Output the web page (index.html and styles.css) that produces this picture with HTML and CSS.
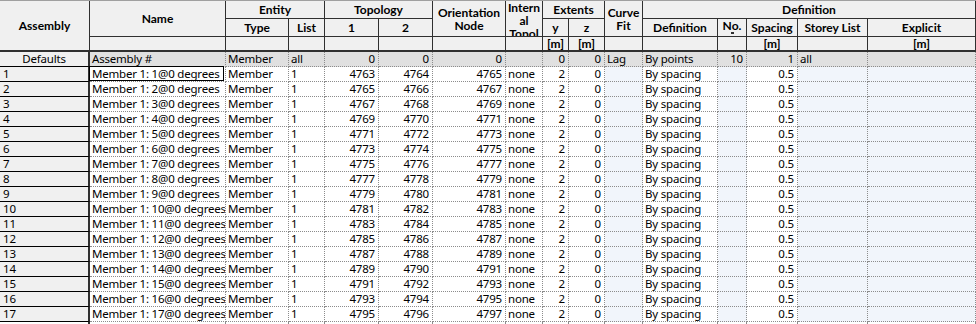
FILE: index.html
```
<!DOCTYPE html>
<html>
<head>
<meta charset="utf-8">
<link rel="stylesheet" href="styles.css">
</head>
<body>
<div class="grid">
<div class="h r3 u"><span>Assembly</span></div>
<div class="h r2"><span>Name</span></div>
<div class="h c2"><span>Entity</span></div>
<div class="h c2"><span>Topology</span></div>
<div class="h r2"><span>Orientation<br>Node</span></div>
<div class="h r2 top"><span>Intern<br>al<br>Topol</span></div>
<div class="h c2"><span>Extents</span></div>
<div class="h r2"><span>Curve<br>Fit</span></div>
<div class="h c5"><span>Definition</span></div>
<div class="h"><span>Type</span></div>
<div class="h"><span>List</span></div>
<div class="h"><span>1</span></div>
<div class="h"><span>2</span></div>
<div class="h"><span>y</span></div>
<div class="h"><span>z</span></div>
<div class="h"><span>Definition</span></div>
<div class="h top"><span>No.<i class="mk"></i></span></div>
<div class="h"><span>Spacing</span></div>
<div class="h"><span>Storey List</span></div>
<div class="h"><span>Explicit</span></div>
<div class="h u"></div>
<div class="h u"></div>
<div class="h u"></div>
<div class="h u"></div>
<div class="h u"></div>
<div class="h u"></div>
<div class="h u"></div>
<div class="h u"><span>[m]</span></div>
<div class="h u"><span>[m]</span></div>
<div class="h u"></div>
<div class="h u"></div>
<div class="h u"></div>
<div class="h u"><span>[m]</span></div>
<div class="h u"></div>
<div class="h u"><span>[m]</span></div>

<div class="rh def">Defaults</div><div class="c d">Assembly #</div><div class="c d">Member</div><div class="c d">all</div><div class="c d n">0</div><div class="c d n">0</div><div class="c d n">0</div><div class="c d"></div><div class="c d n">0</div><div class="c d n">0</div><div class="c d">Lag</div><div class="c d">By points</div><div class="c d n">10</div><div class="c d n">1</div><div class="c d">all</div><div class="c d"></div>

<div class="rh">1</div><div class="c focus">Member 1: 1@0 degrees</div><div class="c">Member</div><div class="c">1</div><div class="c n">4763</div><div class="c n">4764</div><div class="c n">4765</div><div class="c">none</div><div class="c n">2</div><div class="c n">0</div><div class="c b"></div><div class="c">By spacing</div><div class="c b"></div><div class="c n">0.5</div><div class="c b"></div><div class="c b"></div>
<div class="rh">2</div><div class="c">Member 1: 2@0 degrees</div><div class="c">Member</div><div class="c">1</div><div class="c n">4765</div><div class="c n">4766</div><div class="c n">4767</div><div class="c">none</div><div class="c n">2</div><div class="c n">0</div><div class="c b"></div><div class="c">By spacing</div><div class="c b"></div><div class="c n">0.5</div><div class="c b"></div><div class="c b"></div>
<div class="rh">3</div><div class="c">Member 1: 3@0 degrees</div><div class="c">Member</div><div class="c">1</div><div class="c n">4767</div><div class="c n">4768</div><div class="c n">4769</div><div class="c">none</div><div class="c n">2</div><div class="c n">0</div><div class="c b"></div><div class="c">By spacing</div><div class="c b"></div><div class="c n">0.5</div><div class="c b"></div><div class="c b"></div>
<div class="rh">4</div><div class="c">Member 1: 4@0 degrees</div><div class="c">Member</div><div class="c">1</div><div class="c n">4769</div><div class="c n">4770</div><div class="c n">4771</div><div class="c">none</div><div class="c n">2</div><div class="c n">0</div><div class="c b"></div><div class="c">By spacing</div><div class="c b"></div><div class="c n">0.5</div><div class="c b"></div><div class="c b"></div>
<div class="rh">5</div><div class="c">Member 1: 5@0 degrees</div><div class="c">Member</div><div class="c">1</div><div class="c n">4771</div><div class="c n">4772</div><div class="c n">4773</div><div class="c">none</div><div class="c n">2</div><div class="c n">0</div><div class="c b"></div><div class="c">By spacing</div><div class="c b"></div><div class="c n">0.5</div><div class="c b"></div><div class="c b"></div>
<div class="rh">6</div><div class="c">Member 1: 6@0 degrees</div><div class="c">Member</div><div class="c">1</div><div class="c n">4773</div><div class="c n">4774</div><div class="c n">4775</div><div class="c">none</div><div class="c n">2</div><div class="c n">0</div><div class="c b"></div><div class="c">By spacing</div><div class="c b"></div><div class="c n">0.5</div><div class="c b"></div><div class="c b"></div>
<div class="rh">7</div><div class="c">Member 1: 7@0 degrees</div><div class="c">Member</div><div class="c">1</div><div class="c n">4775</div><div class="c n">4776</div><div class="c n">4777</div><div class="c">none</div><div class="c n">2</div><div class="c n">0</div><div class="c b"></div><div class="c">By spacing</div><div class="c b"></div><div class="c n">0.5</div><div class="c b"></div><div class="c b"></div>
<div class="rh">8</div><div class="c">Member 1: 8@0 degrees</div><div class="c">Member</div><div class="c">1</div><div class="c n">4777</div><div class="c n">4778</div><div class="c n">4779</div><div class="c">none</div><div class="c n">2</div><div class="c n">0</div><div class="c b"></div><div class="c">By spacing</div><div class="c b"></div><div class="c n">0.5</div><div class="c b"></div><div class="c b"></div>
<div class="rh">9</div><div class="c">Member 1: 9@0 degrees</div><div class="c">Member</div><div class="c">1</div><div class="c n">4779</div><div class="c n">4780</div><div class="c n">4781</div><div class="c">none</div><div class="c n">2</div><div class="c n">0</div><div class="c b"></div><div class="c">By spacing</div><div class="c b"></div><div class="c n">0.5</div><div class="c b"></div><div class="c b"></div>
<div class="rh">10</div><div class="c">Member 1: 10@0 degrees</div><div class="c">Member</div><div class="c">1</div><div class="c n">4781</div><div class="c n">4782</div><div class="c n">4783</div><div class="c">none</div><div class="c n">2</div><div class="c n">0</div><div class="c b"></div><div class="c">By spacing</div><div class="c b"></div><div class="c n">0.5</div><div class="c b"></div><div class="c b"></div>
<div class="rh">11</div><div class="c">Member 1: 11@0 degrees</div><div class="c">Member</div><div class="c">1</div><div class="c n">4783</div><div class="c n">4784</div><div class="c n">4785</div><div class="c">none</div><div class="c n">2</div><div class="c n">0</div><div class="c b"></div><div class="c">By spacing</div><div class="c b"></div><div class="c n">0.5</div><div class="c b"></div><div class="c b"></div>
<div class="rh">12</div><div class="c">Member 1: 12@0 degrees</div><div class="c">Member</div><div class="c">1</div><div class="c n">4785</div><div class="c n">4786</div><div class="c n">4787</div><div class="c">none</div><div class="c n">2</div><div class="c n">0</div><div class="c b"></div><div class="c">By spacing</div><div class="c b"></div><div class="c n">0.5</div><div class="c b"></div><div class="c b"></div>
<div class="rh">13</div><div class="c">Member 1: 13@0 degrees</div><div class="c">Member</div><div class="c">1</div><div class="c n">4787</div><div class="c n">4788</div><div class="c n">4789</div><div class="c">none</div><div class="c n">2</div><div class="c n">0</div><div class="c b"></div><div class="c">By spacing</div><div class="c b"></div><div class="c n">0.5</div><div class="c b"></div><div class="c b"></div>
<div class="rh">14</div><div class="c">Member 1: 14@0 degrees</div><div class="c">Member</div><div class="c">1</div><div class="c n">4789</div><div class="c n">4790</div><div class="c n">4791</div><div class="c">none</div><div class="c n">2</div><div class="c n">0</div><div class="c b"></div><div class="c">By spacing</div><div class="c b"></div><div class="c n">0.5</div><div class="c b"></div><div class="c b"></div>
<div class="rh">15</div><div class="c">Member 1: 15@0 degrees</div><div class="c">Member</div><div class="c">1</div><div class="c n">4791</div><div class="c n">4792</div><div class="c n">4793</div><div class="c">none</div><div class="c n">2</div><div class="c n">0</div><div class="c b"></div><div class="c">By spacing</div><div class="c b"></div><div class="c n">0.5</div><div class="c b"></div><div class="c b"></div>
<div class="rh">16</div><div class="c">Member 1: 16@0 degrees</div><div class="c">Member</div><div class="c">1</div><div class="c n">4793</div><div class="c n">4794</div><div class="c n">4795</div><div class="c">none</div><div class="c n">2</div><div class="c n">0</div><div class="c b"></div><div class="c">By spacing</div><div class="c b"></div><div class="c n">0.5</div><div class="c b"></div><div class="c b"></div>
<div class="rh">17</div><div class="c">Member 1: 17@0 degrees</div><div class="c">Member</div><div class="c">1</div><div class="c n">4795</div><div class="c n">4796</div><div class="c n">4797</div><div class="c">none</div><div class="c n">2</div><div class="c n">0</div><div class="c b"></div><div class="c">By spacing</div><div class="c b"></div><div class="c n">0.5</div><div class="c b"></div><div class="c b"></div>

<div class="rt"></div><div class="t"></div><div class="t"></div><div class="t"></div><div class="t"></div><div class="t"></div><div class="t"></div><div class="t"></div><div class="t"></div><div class="t"></div><div class="t"></div><div class="t"></div><div class="t"></div><div class="t"></div><div class="t"></div><div class="t"></div>
</div>
</body>
</html>
```
FILE: styles.css
```
html, body {
  margin: 0;
  padding: 0;
  background: #ffffff;
}
body {
  font-family: "Noto Sans", "Open Sans", sans-serif;
  font-size: 11.5px;
  letter-spacing: -0.2px;
  color: #000000;
}
.grid {
  display: grid;
  width: 976px;
  grid-template-columns: 90px 136px 63px 36px 54px 54px 73px 37px 26px 36px 38px 75px 29px 51px 70px 108px;
  grid-template-rows: 18px 18px 15px repeat(18, 15px) 2px;
  border-top: 1px solid #a0a0a0;
}
.h {
  box-sizing: border-box;
  background: #f0f0f0;
  border-right: 1px solid #303030;
  border-bottom: 1px solid #303030;
  font-family: Lato, "Noto Sans", sans-serif;
  font-weight: bold;
  font-size: 12px;
  letter-spacing: 0;
  display: flex;
  align-items: center;
  justify-content: center;
  text-align: center;
  line-height: 13px;
  overflow: hidden;
  white-space: nowrap;
}
.r2 { grid-row: span 2; }
.r3 { grid-row: span 3; }
.c2 { grid-column: span 2; }
.c5 { grid-column: span 5; }
.u { border-bottom-width: 2px; }
.top { align-items: flex-start; }
.mk {
  display: block;
  width: 3px;
  height: 2px;
  margin: 0 auto;
  background: #303030;
}
.c {
  box-sizing: border-box;
  border-right: 1px dotted #8c8c8c;
  border-bottom: 1px dotted #8c8c8c;
  padding: 0 3px 0 2px;
  line-height: 14px;
  white-space: nowrap;
  overflow: hidden;
  background: #ffffff;
}
.n { text-align: right; }
.b { background: #f1f5fb; }
.d { background: #e0e0e0; }
.rh {
  box-sizing: border-box;
  background: #f0f0f0;
  border-right: 2px solid #303030;
  border-bottom: 1px solid #000000;
  padding-left: 3px;
  line-height: 14px;
  white-space: nowrap;
}
.def { text-align: center; padding-left: 0; }
.focus { position: relative; overflow: visible; }
.focus::after {
  content: "";
  position: absolute;
  left: -1px;
  top: -1px;
  right: 1px;
  bottom: 0;
  border: 1px solid #000000;
}
.rt {
  box-sizing: border-box;
  border-right: 2px solid #303030;
}
.t {
  box-sizing: border-box;
  border-right: 1px dotted #8c8c8c;
}
```
